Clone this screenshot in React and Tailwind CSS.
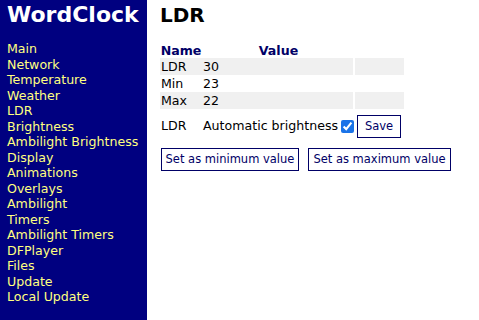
import { useState } from "react";

const menu = [
  "Main",
  "Network",
  "Temperature",
  "Weather",
  "LDR",
  "Brightness",
  "Ambilight Brightness",
  "Display",
  "Animations",
  "Overlays",
  "Ambilight",
  "Timers",
  "Ambilight Timers",
  "DFPlayer",
  "Files",
  "Update",
  "Local Update",
];

const rows = [
  { name: "LDR", value: "30" },
  { name: "Min", value: "23" },
  { name: "Max", value: "22" },
];

export default function App() {
  const [auto, setAuto] = useState(true);

  return (
    <div
      className="flex h-[320px] w-[479px] bg-white text-[12.6px] text-black"
      style={{ fontFamily: '"DejaVu Sans", Verdana, sans-serif' }}
    >
      {/* sidebar */}
      <div className="w-[147px] shrink-0 bg-[#000080] pl-[7px]">
        <h1 className="mt-[2px] text-[22px] font-bold leading-[26px] text-white">WordClock</h1>
        <ul className="mt-[13px] leading-[15.5px] text-[#ffff80]">
          {menu.map((item) => (
            <li key={item}>
              <a href="#">{item}</a>
            </li>
          ))}
        </ul>
      </div>

      {/* content */}
      <div className="flex-1 pl-[13px]">
        <h1 className="mt-[2px] text-[20px] font-bold leading-[26px]">LDR</h1>

        <table className="mt-[14px] border-separate border-spacing-0">
          <thead>
            <tr className="h-[16px]">
              <th className="w-[42px] text-center font-bold leading-[15px] text-[#000066]">Name</th>
              <th className="w-[153px] text-center font-bold leading-[15px] text-[#000066]">Value</th>
              <th className="w-[49px]"></th>
            </tr>
          </thead>
          <tbody>
            {rows.map((r, i) => (
              <tr key={r.name} className={i % 2 === 0 ? "bg-[#f0f0f0]" : ""}>
                <td className="h-[17px] pl-[1px] leading-[15px]">{r.name}</td>
                <td className="h-[17px] border-r-2 border-white pl-[1px] leading-[15px]">{r.value}</td>
                <td className="h-[17px]"></td>
              </tr>
            ))}
          </tbody>
        </table>

        <div className="mt-[6px] flex h-[23px] items-center">
          <span className="w-[42px] pl-[1px]">LDR</span>
          <span className="pl-[1px]">Automatic brightness</span>
          <input
            type="checkbox"
            checked={auto}
            onChange={(e) => setAuto(e.target.checked)}
            className="ml-[3px] h-[13px] w-[13px] accent-[#1a73e8]"
          />
          <button className="ml-[3px] h-[23px] w-[44px] whitespace-nowrap border border-[#000066] bg-white text-[11.5px] text-[#000066]">
            Save
          </button>
        </div>

        <div className="mt-[10px] flex gap-[9px] pl-[1px]">
          <button className="h-[23px] w-[138px] whitespace-nowrap border border-[#000066] bg-white text-[11.5px] text-[#000066]">
            Set as minimum value
          </button>
          <button className="h-[23px] w-[143px] whitespace-nowrap border border-[#000066] bg-white text-[11.5px] text-[#000066]">
            Set as maximum value
          </button>
        </div>
      </div>
    </div>
  );
}
